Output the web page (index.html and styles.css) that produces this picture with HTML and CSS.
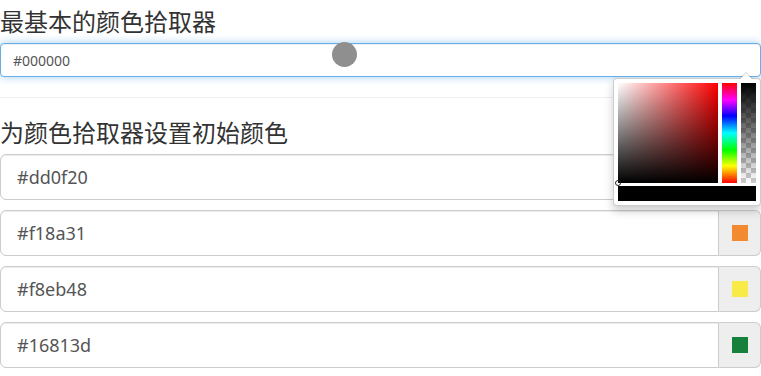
FILE: index.html
```html
<!DOCTYPE html>
<html lang="zh-CN">
<head>
<meta charset="UTF-8" />
<meta name="viewport" content="width=device-width, initial-scale=1" />
<title>颜色拾取器</title>
<link rel="stylesheet" href="styles.css">
</head>
<body>

<div class="page">
  <h3>最基本的颜色拾取器</h3>
  <div class="picker-wrap">
    <input type="text" class="form-control is-focus" value="#000000" />
    <span class="cursor-dot"></span>
    <div class="colorpicker">
      <div class="cp-arrow"></div>
      <div class="cp-top">
        <div class="cp-saturation"><i class="cp-handle"></i></div>
        <div class="cp-hue"></div>
        <div class="cp-alpha"><div class="cp-alpha-fill"></div></div>
      </div>
      <div class="cp-preview"></div>
    </div>
  </div>

  <hr />

  <h3>为颜色拾取器设置初始颜色</h3>
  <div class="input-group">
    <input type="text" class="form-control input-lg" value="#dd0f20" />
    <span class="addon"><i class="swatch" style="background:#dd0f20"></i></span>
  </div>
  <div class="input-group">
    <input type="text" class="form-control input-lg" value="#f18a31" />
    <span class="addon"><i class="swatch" style="background:#f18a31"></i></span>
  </div>
  <div class="input-group">
    <input type="text" class="form-control input-lg" value="#f8eb48" />
    <span class="addon"><i class="swatch" style="background:#f8eb48"></i></span>
  </div>
  <div class="input-group">
    <input type="text" class="form-control input-lg" value="#16813d" />
    <span class="addon"><i class="swatch" style="background:#16813d"></i></span>
  </div>
</div>

</body>
</html>
```

FILE: styles.css
```css
body { margin: 0; background: #fff; color: #333; font-family: "Noto Sans", "Noto Sans CJK SC", sans-serif; font-size: 14px; }
.page { width: 761px; }
h3 { font-family: "Noto Sans CJK SC", sans-serif; font-weight: 400; font-size: 24px; line-height: 26px; margin: 8px 0 9px; color: #333; }
hr { border: 0; border-top: 1px solid #eee; margin: 20px 0 21px; }

.form-control { display: block; box-sizing: border-box; width: 100%; height: 34px; padding: 6px 12px; font-family: inherit; font-size: 14px; color: #555; background: #fff; border: 1px solid #ccc; border-radius: 4px; box-shadow: inset 0 1px 1px rgba(0,0,0,.075); outline: none; }
.form-control.is-focus { border-color: #66afe9; box-shadow: inset 0 1px 1px rgba(0,0,0,.075), 0 0 8px rgba(102,175,233,.6); }
.input-lg { height: 46px; padding: 10px 16px; font-size: 18px; border-radius: 6px 0 0 6px; }

.picker-wrap { position: relative; }
.cursor-dot { position: absolute; left: 332px; top: -1px; width: 25px; height: 25px; border-radius: 50%; background: #8f8f8f; }

.colorpicker { position: absolute; right: 0; top: 35px; z-index: 5; padding: 4px; background: #fff; border: 1px solid rgba(0,0,0,.2); border-radius: 4px; box-shadow: 0 5px 10px rgba(0,0,0,.2); }
.cp-arrow { position: absolute; top: -7px; right: 7px; width: 0; height: 0; border-left: 7px solid transparent; border-right: 7px solid transparent; border-bottom: 7px solid rgba(0,0,0,.2); }
.cp-arrow::after { content: ""; position: absolute; top: 1px; left: -6px; border-left: 6px solid transparent; border-right: 6px solid transparent; border-bottom: 6px solid #fff; }
.cp-top { display: flex; gap: 4px; }
.cp-saturation { position: relative; width: 100px; height: 100px; background: linear-gradient(to bottom, transparent, #000), linear-gradient(to right, #fff, rgba(255,255,255,0)), #f00; }
.cp-handle { position: absolute; left: -3px; bottom: -3px; width: 4px; height: 4px; border: 1px solid #222; border-radius: 50%; }
.cp-hue { width: 15px; height: 100px; background: linear-gradient(to bottom, #f00 0%, #f0f 17%, #00f 33%, #0ff 50%, #0f0 67%, #ff0 83%, #f00 100%); }
.cp-alpha { width: 15px; height: 100px; background-color: #fff; background-image: linear-gradient(45deg, #ccc 25%, transparent 25%, transparent 75%, #ccc 75%), linear-gradient(45deg, #ccc 25%, transparent 25%, transparent 75%, #ccc 75%); background-size: 10px 10px; background-position: 0 0, 5px 5px; }
.cp-alpha-fill { height: 100%; background: linear-gradient(to bottom, #000, rgba(0,0,0,0)); }
.cp-preview { margin-top: 3px; height: 15px; background: #000; }

.input-group { display: flex; margin-bottom: 10px; }
.input-group .form-control { flex: 1; }
.addon { display: flex; align-items: center; justify-content: center; box-sizing: border-box; width: 42px; height: 46px; background: #eee; border: 1px solid #ccc; border-left: 0; border-radius: 0 6px 6px 0; }
.swatch { display: block; width: 16px; height: 16px; }
```
